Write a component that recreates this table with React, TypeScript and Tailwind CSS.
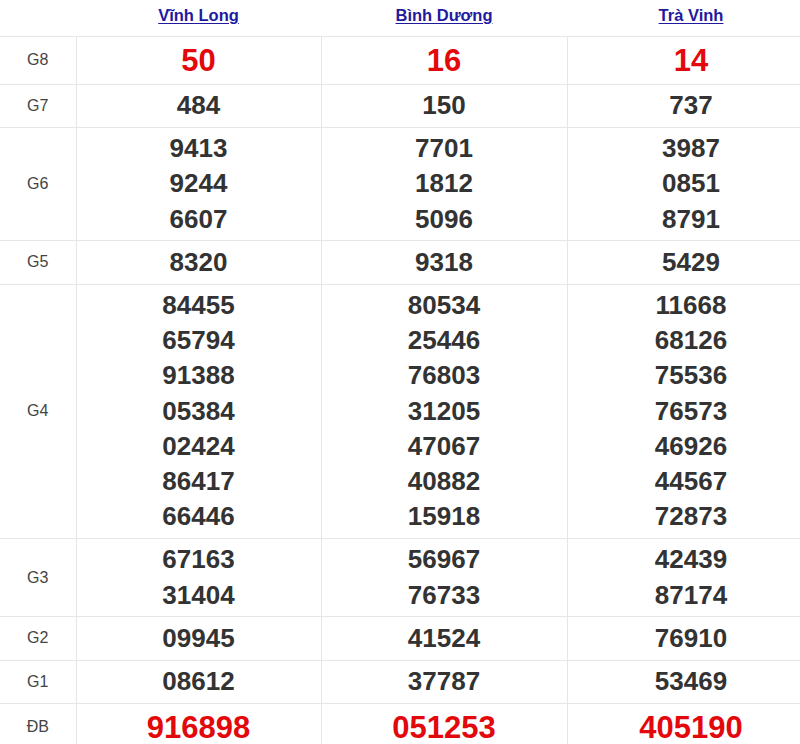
import React from "react";

const provinces = ["Vĩnh Long", "Bình Dương", "Trà Vinh"];

type Row = { label: string; values: string[][]; big?: boolean };

const rows: Row[] = [
  { label: "G8", values: [["50"], ["16"], ["14"]], big: true },
  { label: "G7", values: [["484"], ["150"], ["737"]] },
  {
    label: "G6",
    values: [
      ["9413", "9244", "6607"],
      ["7701", "1812", "5096"],
      ["3987", "0851", "8791"],
    ],
  },
  { label: "G5", values: [["8320"], ["9318"], ["5429"]] },
  {
    label: "G4",
    values: [
      ["84455", "65794", "91388", "05384", "02424", "86417", "66446"],
      ["80534", "25446", "76803", "31205", "47067", "40882", "15918"],
      ["11668", "68126", "75536", "76573", "46926", "44567", "72873"],
    ],
  },
  {
    label: "G3",
    values: [
      ["67163", "31404"],
      ["56967", "76733"],
      ["42439", "87174"],
    ],
  },
  { label: "G2", values: [["09945"], ["41524"], ["76910"]] },
  { label: "G1", values: [["08612"], ["37787"], ["53469"]] },
  { label: "ĐB", values: [["916898"], ["051253"], ["405190"]], big: true },
];

export default function App() {
  return (
    <div className="w-[800px] h-[744px] overflow-hidden bg-white font-['Liberation_Sans',Arial,sans-serif]">
      <table className="border-collapse table-fixed w-[815px]">
        <colgroup>
          <col className="w-[76px]" />
          <col className="w-[245px]" />
          <col className="w-[246px]" />
          <col className="w-[248px]" />
        </colgroup>
        <thead>
          <tr className="border-b border-[#e6e6e6]">
            <th className="h-[36px] p-0"></th>
            {provinces.map((p) => (
              <th key={p} className="h-[36px] p-0 pb-[4px] text-center align-middle">
                <a
                  href="#"
                  className="text-[16.5px] font-bold text-[#1f1aa0] underline underline-offset-[2px]"
                >
                  {p}
                </a>
              </th>
            ))}
          </tr>
        </thead>
        <tbody>
          {rows.map((r) => (
            <tr key={r.label} className="border-b border-[#e6e6e6]">
              <td className="border-r border-[#e6e6e6] text-center align-middle text-[16px] text-[#444] p-0">
                {r.label}
              </td>
              {r.values.map((vals, i) => (
                <td
                  key={i}
                  className={
                    r.big
                      ? "border-r border-[#e6e6e6] text-center align-middle py-[4px] text-[31px] leading-[39px] font-bold text-[#e3080c]"
                      : "border-r border-[#e6e6e6] text-center align-middle py-[3.5px] text-[26px] leading-[35.2px] font-bold text-[#333]"
                  }
                >
                  {vals.map((v) => (
                    <div key={v}>{v}</div>
                  ))}
                </td>
              ))}
            </tr>
          ))}
        </tbody>
      </table>
    </div>
  );
}
